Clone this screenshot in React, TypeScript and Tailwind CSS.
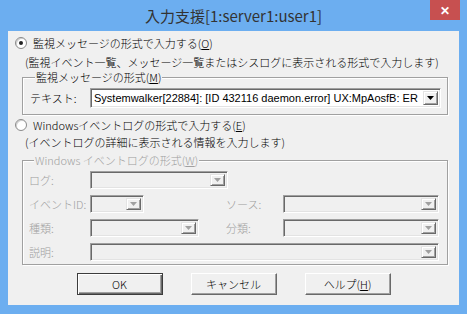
import React from "react";

const JP = { fontFamily: '"Noto Sans CJK JP", "Noto Sans", sans-serif' };

function Arrow({ enabled }: { enabled: boolean }) {
  return (
    <svg width="7" height="4" viewBox="0 0 7 4">
      <polygon points="0,0 7,0 3.5,4" fill={enabled ? "#000" : "#a0a0a0"} />
    </svg>
  );
}

function DropBtn({ enabled }: { enabled: boolean }) {
  return (
    <div className="flex w-[15px] shrink-0 items-center justify-center bg-[#f0f0f0] border border-t-[#e3e3e3] border-l-[#e3e3e3] border-r-[#696969] border-b-[#696969] shadow-[inset_1px_1px_0_#fff,inset_-1px_-1px_0_#a0a0a0]">
      <Arrow enabled={enabled} />
    </div>
  );
}

function Combo({
  className,
  enabled = false,
  text,
}: {
  className: string;
  enabled?: boolean;
  text?: string;
}) {
  return (
    <div
      className={
        "flex min-w-0 items-stretch p-[2px] border border-t-[#a0a0a0] border-l-[#a0a0a0] border-r-white border-b-white shadow-[inset_1px_1px_0_#696969,inset_-1px_-1px_0_#e3e3e3] " +
        (enabled ? "bg-white " : "bg-[#f0f0f0] ") +
        className
      }
    >
      <div
        className="min-w-0 flex-1 overflow-hidden whitespace-nowrap pl-[1px] text-[11px] leading-[14px] text-black"
        style={{ fontFamily: '"Liberation Sans", Arial, sans-serif' }}
      >
        {text}
      </div>
      <DropBtn enabled={enabled} />
    </div>
  );
}

function Radio({ checked }: { checked: boolean }) {
  return (
    <div className="flex h-[12px] w-[12px] items-center justify-center rounded-full border border-[#8a8a8a] bg-white shadow-[inset_1px_1px_0_#d0d0d0]">
      {checked && <div className="h-[4px] w-[4px] rounded-full bg-[#222]" />}
    </div>
  );
}

function Btn({ children, def = false }: { children: React.ReactNode; def?: boolean }) {
  return (
    <div
      className={
        "flex h-[22px] w-[86px] items-center justify-center bg-[#f0f0f0] text-[11px] leading-[14px] text-black " +
        (def
          ? "border border-[#3c3c3c] shadow-[inset_1px_1px_0_#fff,inset_-1px_-1px_0_#696969,inset_-2px_-2px_0_#a0a0a0]"
          : "border border-t-white border-l-white border-r-[#696969] border-b-[#696969] shadow-[inset_-1px_-1px_0_#a0a0a0]")
      }
    >
      {children}
    </div>
  );
}

export default function App() {
  return (
    <div className="flex h-[314px] w-[467px] flex-col bg-[#6caef0] font-light" style={JP}>
      {/* title bar */}
      <div className="relative flex h-[31px] items-center justify-center">
        <div className="pt-[1px] text-[15px] font-normal leading-[20px] text-[#333]">入力支援[1:server1:user1]</div>
        <div className="absolute right-[7px] top-0 flex h-[20px] w-[30px] items-center justify-center bg-[#c75050] text-[12px] font-bold leading-none text-white">
          ✕
        </div>
      </div>

      {/* client */}
      <div className="mx-[8px] flex h-[274px] flex-col bg-[#f0f0f0] text-[11px] leading-[14px] text-black">
        <div className="mt-[5px] flex items-center pl-[7px]">
          <Radio checked />
          <span className="ml-[6px]">
            監視メッセージの形式で入力する(<u>O</u>)
          </span>
        </div>
        <div className="mt-[5px] whitespace-nowrap pl-[17px]">
          (監視イベント一覧、メッセージ一覧またはシスログに表示される形式で入力します)
        </div>

        <fieldset className="ml-[14px] mt-[1px] w-[426px] min-w-0 border border-[#a0a0a0] pb-[6px] pl-[7px] pr-[6px] pt-[4px] shadow-[inset_1px_1px_0_#fff,1px_1px_0_#fff]">
          <legend className="ml-[5px] bg-[#f0f0f0] px-[1px] text-[11px] leading-[14px]">
            監視メッセージの形式(<u>M</u>)
          </legend>
          <div className="flex items-center">
            <div className="w-[60px] shrink-0">テキスト:</div>
            <Combo
              className="h-[20px] flex-1"
              enabled
              text="Systemwalker[22884]: [ID 432116 daemon.error] UX:MpAosfB: ER"
            />
          </div>
        </fieldset>

        <div className="mt-[3px] flex items-center pl-[7px]">
          <Radio checked={false} />
          <span className="ml-[6px]">
            Windowsイベントログの形式で入力する(<u>E</u>)
          </span>
        </div>
        <div className="mt-[3px] whitespace-nowrap pl-[17px]">
          (イベントログの詳細に表示される情報を入力します)
        </div>

        <fieldset className="ml-[14px] mt-[4px] w-[426px] min-w-0 border border-[#a0a0a0] pb-[3px] pl-[6px] pr-[7px] pt-[4px] text-[#a0a0a0] shadow-[inset_1px_1px_0_#fff,1px_1px_0_#fff]">
          <legend className="ml-[5px] bg-[#f0f0f0] px-[1px] text-[11px] leading-[14px]">
            Windows イベントログの形式(<u>W</u>)
          </legend>
          <div className="grid grid-cols-[61px_136px_57px_156px] items-center gap-y-[6px]">
            <div>ログ:</div>
            <div className="col-span-3">
              <Combo className="h-[18px] w-[138px]" />
            </div>

            <div>イベントID:</div>
            <div>
              <Combo className="h-[18px] w-[54px]" />
            </div>
            <div>ソース:</div>
            <div>
              <Combo className="h-[18px] w-[156px]" />
            </div>

            <div>種類:</div>
            <div>
              <Combo className="h-[18px] w-[109px]" />
            </div>
            <div>分類:</div>
            <div>
              <Combo className="h-[18px] w-[156px]" />
            </div>

            <div>説明:</div>
            <div className="col-span-3">
              <Combo className="h-[18px] w-[349px]" />
            </div>
          </div>
        </fieldset>

        <div className="mt-[8px] flex justify-center gap-[28px]">
          <Btn def>OK</Btn>
          <Btn>キャンセル</Btn>
          <Btn>
            ヘルプ(<u>H</u>)
          </Btn>
        </div>
      </div>
    </div>
  );
}
